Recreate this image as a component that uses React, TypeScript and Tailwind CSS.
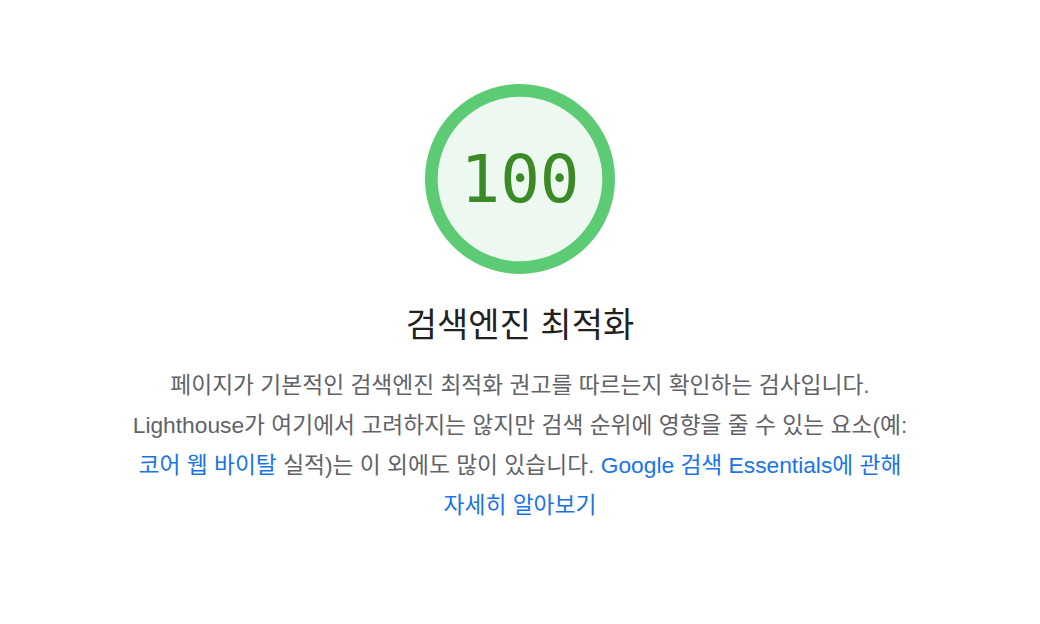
import React from 'react';

// Puntuación de la categoría (gauge estilo Lighthouse)
function Gauge({ score }: { score: number }) {
  return (
    <div className="relative w-[190px] h-[190px]">
      <svg viewBox="0 0 120 120" className="w-full h-full">
        <circle cx="60" cy="60" r="56" fill="#edf8f0" stroke="#5ccb73" strokeWidth="8" />
      </svg>
      <div className="absolute inset-0 flex items-center justify-center pt-[2px] text-[66px] text-[#3b8a26] font-['DejaVu_Sans_Mono',monospace] leading-none">
        {score}
      </div>
    </div>
  );
}

export default function App() {
  return (
    <main className="min-h-screen w-full bg-white flex flex-col items-center pt-[84px] font-['Liberation_Sans','Noto_Sans_CJK_KR',sans-serif]">
      <Gauge score={100} />

      <h1 className="mt-[31px] text-[34px] leading-[40px] font-normal text-[#212121]">
        검색엔진 최적화
      </h1>

      <p className="mt-[20px] text-center text-[22.75px] leading-[40px] text-[#5f6368]">
        페이지가 기본적인 검색엔진 최적화 권고를 따르는지 확인하는 검사입니다.
        <br />
        Lighthouse가 여기에서 고려하지는 않지만 검색 순위에 영향을 줄 수 있는 요소(예:
        <br />
        <a href="#" className="text-[#1a73e8]">코어 웹 바이탈</a> 실적)는 이 외에도 많이 있습니다.{' '}
        <a href="#" className="text-[#1a73e8]">
          Google 검색 Essentials에 관해
          <br />
          자세히 알아보기
        </a>
      </p>
    </main>
  );
}
